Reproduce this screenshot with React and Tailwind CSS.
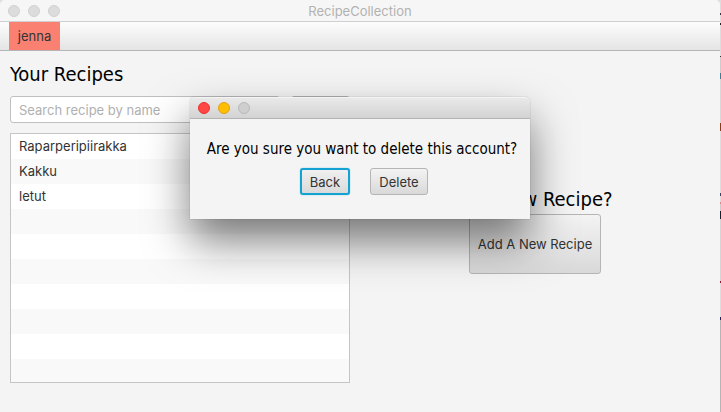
const recipes = ["Raparperipiirakka", "Kakku", "letut"];
const rows = Array.from({ length: 10 }, (_, i) => recipes[i] ?? "");

const headingFont = "font-['DejaVu_Sans_Condensed','Noto_Sans',sans-serif]";
const buttonLook =
  "rounded-[3px] border border-[#b5b5b5] bg-linear-to-b from-[#f3f3f3] to-[#d9d9d9] text-[#333]";

function Light({ className, label }) {
  return <button type="button" aria-label={label} className={`size-3 rounded-full border ${className}`} />;
}

function TitleBar() {
  const grey = "border-[#d0d0d0] bg-[#dcdcdc]";
  return (
    <header className="grid h-[22px] grid-cols-3 items-center border-b border-[#cfcfcf] bg-[#f6f6f6] px-2">
      <div className="flex gap-2">
        <Light label="Close" className={grey} />
        <Light label="Minimize" className={grey} />
        <Light label="Zoom" className={grey} />
      </div>
      <h1 className="text-center text-[#b2b2b2]">RecipeCollection</h1>
    </header>
  );
}

function RecipeList() {
  return (
    <ul className="h-[250px] overflow-hidden border border-[#c5c5c5] bg-white">
      {rows.map((name, i) => (
        <li key={i} className="h-[25px] px-2 leading-[25px] odd:bg-white even:bg-[#f9f9f9]">
          {name}
        </li>
      ))}
    </ul>
  );
}

function ConfirmDialog() {
  return (
    <div className="absolute right-px left-0 top-[97px] flex justify-center">
      <section
        role="dialog"
        aria-labelledby="confirm-text"
        className="w-[340px] rounded-t-[5px] bg-[#f4f4f4] shadow-[0_0_1px_rgba(0,0,0,0.5),0_22px_44px_rgba(0,0,0,0.52)]"
      >
        <div className="flex h-[22px] items-center gap-2 rounded-t-[5px] border-t border-b border-t-[#f4f4f4] border-b-[#b3b3b3] bg-linear-to-b from-[#e9e9e9] to-[#d3d3d3] px-2">
          <Light label="Close dialog" className="border-[#e9302f] bg-[#fe4645]" />
          <Light label="Minimize dialog" className="border-[#e5a012] bg-[#fdbe04]" />
          <Light label="Zoom dialog" className="border-[#b9b9b9] bg-[#cecece]" />
        </div>
        <div className="flex flex-col items-center gap-[9px] pt-5 pb-6 pl-1">
          <p id="confirm-text" className={`text-[15px] leading-5 whitespace-nowrap text-black ${headingFont}`}>
            Are you sure you want to delete this account?
          </p>
          <div className="flex gap-5 pl-1">
            <button
              type="button"
              className="h-[27px] w-[50px] rounded-[3px] border-2 border-[#13a2d2] bg-linear-to-b from-[#f0f0f0] to-[#dadada] text-[#333] shadow-[0_0_1px_#13a2d2]"
            >
              Back
            </button>
            <button type="button" className={`h-[27px] w-[58px] ${buttonLook}`}>
              Delete
            </button>
          </div>
        </div>
      </section>
    </div>
  );
}

export default function App() {
  return (
    <div className="relative flex min-h-screen overflow-hidden bg-[#dedede] font-[Inter,'Liberation_Sans',sans-serif] text-[13px] leading-5 text-[#333]">
      <div className="flex-1 overflow-hidden rounded-t-[5px] bg-[#f4f4f4]">
        <TitleBar />
        <nav className="flex h-[29px] border-b border-[#b5b5b5] bg-linear-to-b from-[#fdfdfd] to-[#e4e4e4] px-[9px]">
          <button type="button" className="w-[51px] bg-[#fa8072] text-[#333]">
            jenna
          </button>
        </nav>
        <main className="flex gap-[10px] px-[10px] pt-[10px]">
          <div className="w-[340px] shrink-0">
            <h2 className={`text-xl leading-[26px] text-black ${headingFont}`}>Your Recipes</h2>
            <div className="mt-[9px] mb-[10px] flex justify-between">
              <input
                type="text"
                aria-label="Search recipe by name"
                placeholder="Search recipe by name"
                className="h-[27px] w-[270px] rounded-[3px] border border-[#c0c0c0] bg-white px-2 placeholder:text-[#b0b0b0]"
              />
              <button type="button" aria-label="Search" className={`h-[27px] w-[59px] ${buttonLook}`} />
            </div>
            <RecipeList />
          </div>
          <div className="flex flex-1 flex-col items-center pt-[125px]">
            <h2 className={`text-xl leading-[26px] whitespace-nowrap text-black ${headingFont}`}>Add New Recipe?</h2>
            <button type="button" className={`mt-[2px] h-[60px] w-[132px] ${buttonLook}`}>
              Add A New Recipe
            </button>
          </div>
        </main>
      </div>
      <div className="w-px bg-[linear-gradient(#ddd_13px,#334_13px_15px,#ddd_15px_23px,#222_23px_25px,#ddd_25px_56px,#333_56px_57px,#ccc_57px_73px,#3b7f96_73px_79px,#d8d8d8_79px_123px,#8c3d12_123px_131px,#ddd_131px_193px,#346_193px_196px,#ddd_196px_202px,#d88_202px_204px,#ccc_204px_211px,#123_211px_219px,#d5d5d5_219px_281px,#913_281px_283px,#ddd_283px_317px,#226_317px_320px,#b5b5b5_320px)]" />
      <ConfirmDialog />
    </div>
  );
}
